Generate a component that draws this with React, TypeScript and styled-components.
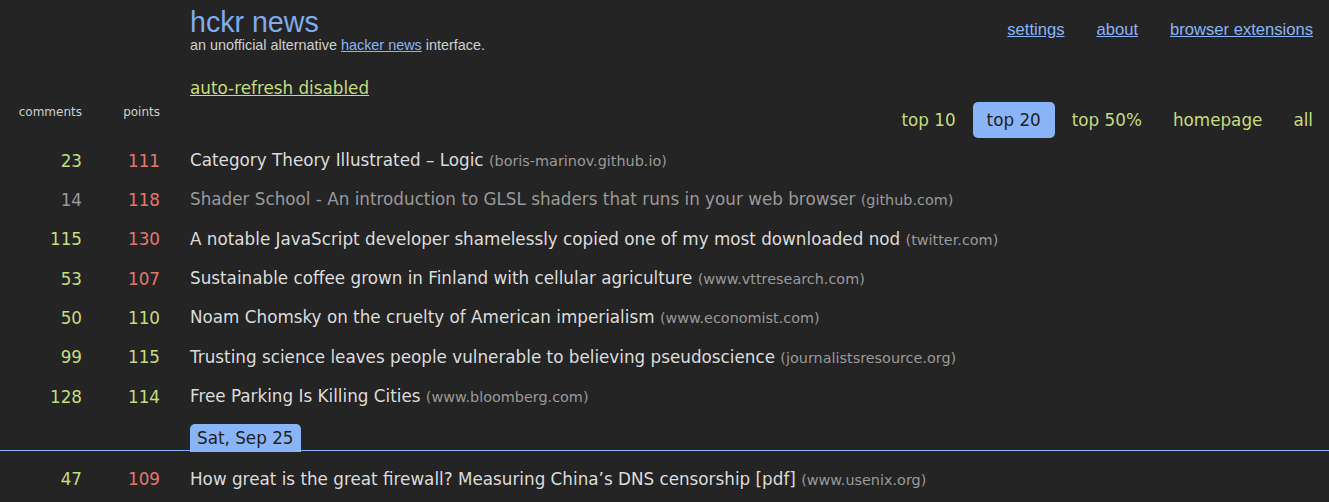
import React from "react";
import styled, { createGlobalStyle } from "styled-components";

const BLUE = "#8ab4f8";
const GREEN = "#c6dd7d";
const RED = "#e5786d";

const GlobalStyle = createGlobalStyle`
  html, body {
    margin: 0;
    padding: 0;
    background: #242424;
  }
  body {
    font-family: "DejaVu Sans", sans-serif;
    color: #dcdcdc;
  }
`;

type Story = {
  id: number;
  comments: number;
  points: number;
  title: string;
  domain: string;
  hot: boolean;
  visited?: boolean;
};

const STORIES: Story[] = [
  { id: 1, comments: 23, points: 111, title: "Category Theory Illustrated – Logic", domain: "boris-marinov.github.io", hot: true },
  { id: 2, comments: 14, points: 118, title: "Shader School - An introduction to GLSL shaders that runs in your web browser", domain: "github.com", hot: true, visited: true },
  { id: 3, comments: 115, points: 130, title: "A notable JavaScript developer shamelessly copied one of my most downloaded nod", domain: "twitter.com", hot: true },
  { id: 4, comments: 53, points: 107, title: "Sustainable coffee grown in Finland with cellular agriculture", domain: "www.vttresearch.com", hot: true },
  { id: 5, comments: 50, points: 110, title: "Noam Chomsky on the cruelty of American imperialism", domain: "www.economist.com", hot: false },
  { id: 6, comments: 99, points: 115, title: "Trusting science leaves people vulnerable to believing pseudoscience", domain: "journalistsresource.org", hot: false },
  { id: 7, comments: 128, points: 114, title: "Free Parking Is Killing Cities", domain: "www.bloomberg.com", hot: false },
];

const LATER: Story[] = [
  { id: 8, comments: 47, points: 109, title: "How great is the great firewall? Measuring China’s DNS censorship [pdf]", domain: "www.usenix.org", hot: true },
];

const TABS = ["top 10", "top 20", "top 50%", "homepage", "all"];

const StoryRow = ({ story }: { story: Story }) => (
  <Row>
    <Count $muted={story.visited}>{story.comments}</Count>
    <Points $hot={story.hot}>{story.points}</Points>
    <TitleCell $visited={story.visited}>
      {story.title} <Domain>({story.domain})</Domain>
    </TitleCell>
  </Row>
);

const App = () => {
  return (
    <Page>
      <GlobalStyle />
      <Header>
        <Brand>
          <Logo>hckr news</Logo>
          <Tagline>
            an unofficial alternative <a href="#">hacker news</a> interface.
          </Tagline>
        </Brand>
        <Nav>
          <a href="#">settings</a>
          <a href="#">about</a>
          <a href="#">browser extensions</a>
        </Nav>
      </Header>

      <RefreshLine>
        <a href="#">auto-refresh disabled</a>
      </RefreshLine>

      <HeadRow>
        <Label>comments</Label>
        <Label>points</Label>
        <Tabs>
          {TABS.map((t) => (
            <Tab key={t} $active={t === "top 20"}>
              {t}
            </Tab>
          ))}
        </Tabs>
      </HeadRow>

      <List>
        {STORIES.map((s) => (
          <StoryRow key={s.id} story={s} />
        ))}
      </List>

      <DateBar>
        <DateBadge>Sat, Sep 25</DateBadge>
      </DateBar>

      <List>
        {LATER.map((s) => (
          <StoryRow key={s.id} story={s} />
        ))}
      </List>
    </Page>
  );
};

export default App;

const Page = styled.div`
  padding: 6px 16px 0 0;
  overflow: hidden;
`;

const Header = styled.header`
  display: flex;
  justify-content: space-between;
  align-items: flex-start;
  padding-left: 190px;
  font-family: "Liberation Sans", Arial, sans-serif;
`;

const Brand = styled.div`
  display: flex;
  flex-direction: column;
`;

const Logo = styled.h1`
  margin: 0;
  font-size: 28.6px;
  font-weight: 400;
  line-height: 33px;
  color: #7eacee;
`;

const Tagline = styled.div`
  margin-top: -2px;
  font-size: 14.4px;
  line-height: 16px;
  color: #d0d0d0;
  a {
    color: ${BLUE};
  }
`;

const Nav = styled.nav`
  display: flex;
  gap: 32px;
  margin-top: 14px;
  font-size: 16.6px;
  line-height: 19px;
  a {
    color: ${BLUE};
  }
`;

const RefreshLine = styled.div`
  margin-top: 25px;
  padding-left: 190px;
  font-size: 16.8px;
  line-height: 20px;
  a {
    color: ${GREEN};
  }
`;

const HeadRow = styled.div`
  display: grid;
  grid-template-columns: 82px 78px 1fr;
  align-items: start;
  margin-top: 4px;
`;

const Label = styled.span`
  padding-top: 3px;
  font-size: 12px;
  line-height: 14px;
  color: #cfcfcf;
  text-align: right;
`;

const Tabs = styled.div`
  display: flex;
  justify-content: flex-end;
  gap: 3px;
  margin-right: -14px;
`;

const Tab = styled.a<{ $active?: boolean }>`
  padding: 8px 14px;
  font-size: 16.8px;
  line-height: 20px;
  border-radius: 5px;
  color: ${(p) => (p.$active ? "#1e1e1e" : GREEN)};
  background: ${(p) => (p.$active ? BLUE : "transparent")};
`;

const List = styled.div`
  display: grid;
  grid-auto-rows: 39.33px;
  margin-top: 3px;
`;

const Row = styled.div`
  display: grid;
  grid-template-columns: 82px 78px 1fr;
  align-items: center;
  font-size: 16.8px;
  line-height: 20px;
  white-space: nowrap;
`;

const Count = styled.span<{ $muted?: boolean }>`
  text-align: right;
  color: ${(p) => (p.$muted ? "#9a9a9a" : GREEN)};
`;

const Points = styled.span<{ $hot?: boolean }>`
  text-align: right;
  color: ${(p) => (p.$hot ? RED : GREEN)};
`;

const TitleCell = styled.span<{ $visited?: boolean }>`
  padding-left: 30px;
  color: ${(p) => (p.$visited ? "#9a9a9a" : "#dcdcdc")};
`;

const Domain = styled.span`
  font-size: 14.4px;
  color: #9a9a9a;
`;

const DateBar = styled.div`
  display: flex;
  align-items: flex-start;
  margin: 7.5px -16px 9px 0;
  padding-left: 190px;
  border-bottom: 1px solid ${BLUE};
`;

const DateBadge = styled.span`
  margin-bottom: -2px;
  padding: 4px 7px;
  font-size: 16.8px;
  line-height: 20px;
  color: #1e1e1e;
  background: ${BLUE};
  border-radius: 5px 5px 0 0;
`;
